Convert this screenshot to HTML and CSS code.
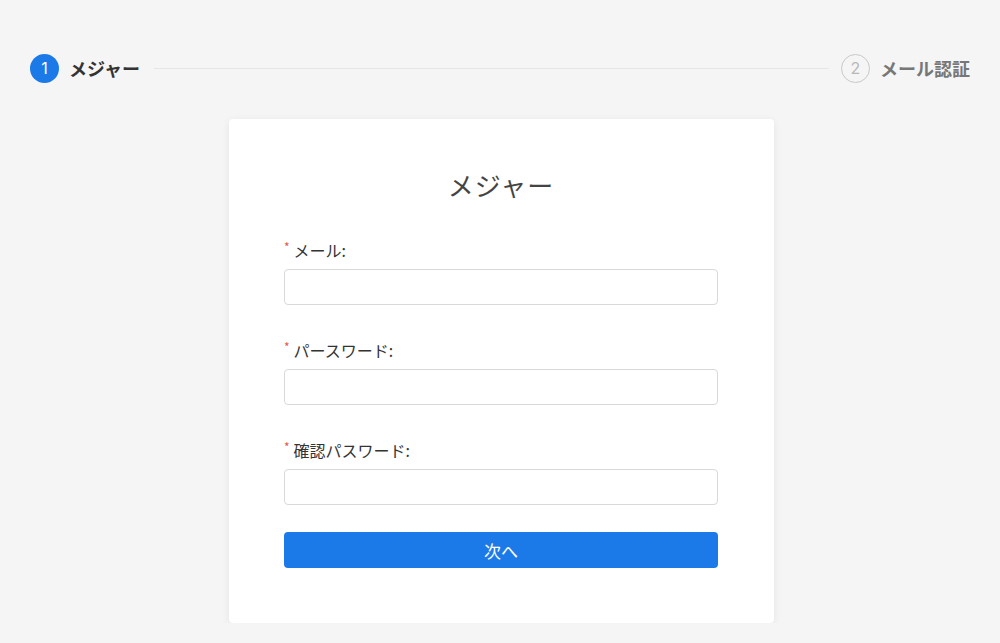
FILE: index.html
```html
<!DOCTYPE html>
<html lang="ja">
<head>
<meta charset="utf-8">
<title>メジャー</title>
<link rel="stylesheet" href="styles.css">
</head>
<body>
<div class="page">
  <div class="steps">
    <div class="step active">
      <span class="step-icon">1</span>
      <span class="step-title">メジャー</span>
    </div>
    <div class="step-line"></div>
    <div class="step waiting">
      <span class="step-icon">2</span>
      <span class="step-title">メール認証</span>
    </div>
  </div>
  <div class="card">
    <h1 class="card-title">メジャー</h1>
    <form class="form">
      <div class="field">
        <label class="label"><span class="req">*</span>メール:</label>
        <input class="input" type="text">
      </div>
      <div class="field">
        <label class="label"><span class="req">*</span>パースワード:</label>
        <input class="input" type="password">
      </div>
      <div class="field">
        <label class="label"><span class="req">*</span>確認パスワード:</label>
        <input class="input" type="password">
      </div>
      <button class="btn" type="button">次へ</button>
    </form>
  </div>
</div>
</body>
</html>
```
FILE: styles.css
```css
html, body {
  margin: 0;
  padding: 0;
  background: #f5f5f5;
  font-family: "Noto Sans CJK JP", "Noto Sans", sans-serif;
  color: #333;
}
.page {
  padding: 53px 30px 0 30px;
}
.steps {
  display: flex;
  align-items: center;
  height: 30px;
}
.step {
  display: flex;
  align-items: center;
  gap: 10px;
}
.step-icon {
  width: 29px;
  height: 29px;
  box-sizing: border-box;
  border-radius: 50%;
  display: flex;
  align-items: center;
  justify-content: center;
  font-family: "Inter", "Noto Sans", sans-serif;
  font-size: 16px;
}
.step.active .step-icon {
  background: #1c7ae8;
  color: #fff;
}
.step.waiting .step-icon {
  border: 1px solid #c8c8c8;
  color: #b8b8b8;
}
.step-title {
  font-size: 18px;
  font-weight: 700;
  line-height: 30px;
}
.step.active .step-title { color: #333; }
.step.waiting .step-title { color: #777; }
.step-line {
  flex: 1;
  height: 1px;
  background: #e6e6e6;
  margin: 0 12px 0 14px;
}
.card {
  width: 545px;
  margin: 36px 0 0 199px;
  box-sizing: border-box;
  background: #fff;
  border-radius: 4px;
  box-shadow: 0 2px 8px rgba(0,0,0,0.07);
  padding: 48px 56px 55px 55px;
}
.card-title {
  margin: 0 0 36px;
  text-align: center;
  font-size: 26px;
  font-weight: 400;
  line-height: 36px;
  color: #444;
  letter-spacing: 1px;
}
.form {
  display: flex;
  flex-direction: column;
}
.field {
  display: flex;
  flex-direction: column;
  gap: 8px;
  margin-bottom: 34px;
}
.field:nth-of-type(3) {
  margin-bottom: 27px;
}
.label {
  display: flex;
  align-items: center;
  height: 22px;
  font-size: 16px;
  line-height: 22px;
  color: #333;
}
.req {
  color: #e5534b;
  font-size: 12px;
  line-height: 1;
  margin-right: 4px;
  position: relative;
  top: -3px;
}
.input {
  height: 36px;
  box-sizing: border-box;
  border: 1px solid #d9d9d9;
  border-radius: 4px;
  background: #fff;
  padding: 0 10px;
  font-size: 15px;
  outline: none;
}
.btn {
  height: 36px;
  border: none;
  border-radius: 4px;
  background: #1c7ae8;
  color: #fff;
  font-family: "Noto Sans CJK JP", sans-serif;
  font-size: 17px;
  cursor: pointer;
}
```
